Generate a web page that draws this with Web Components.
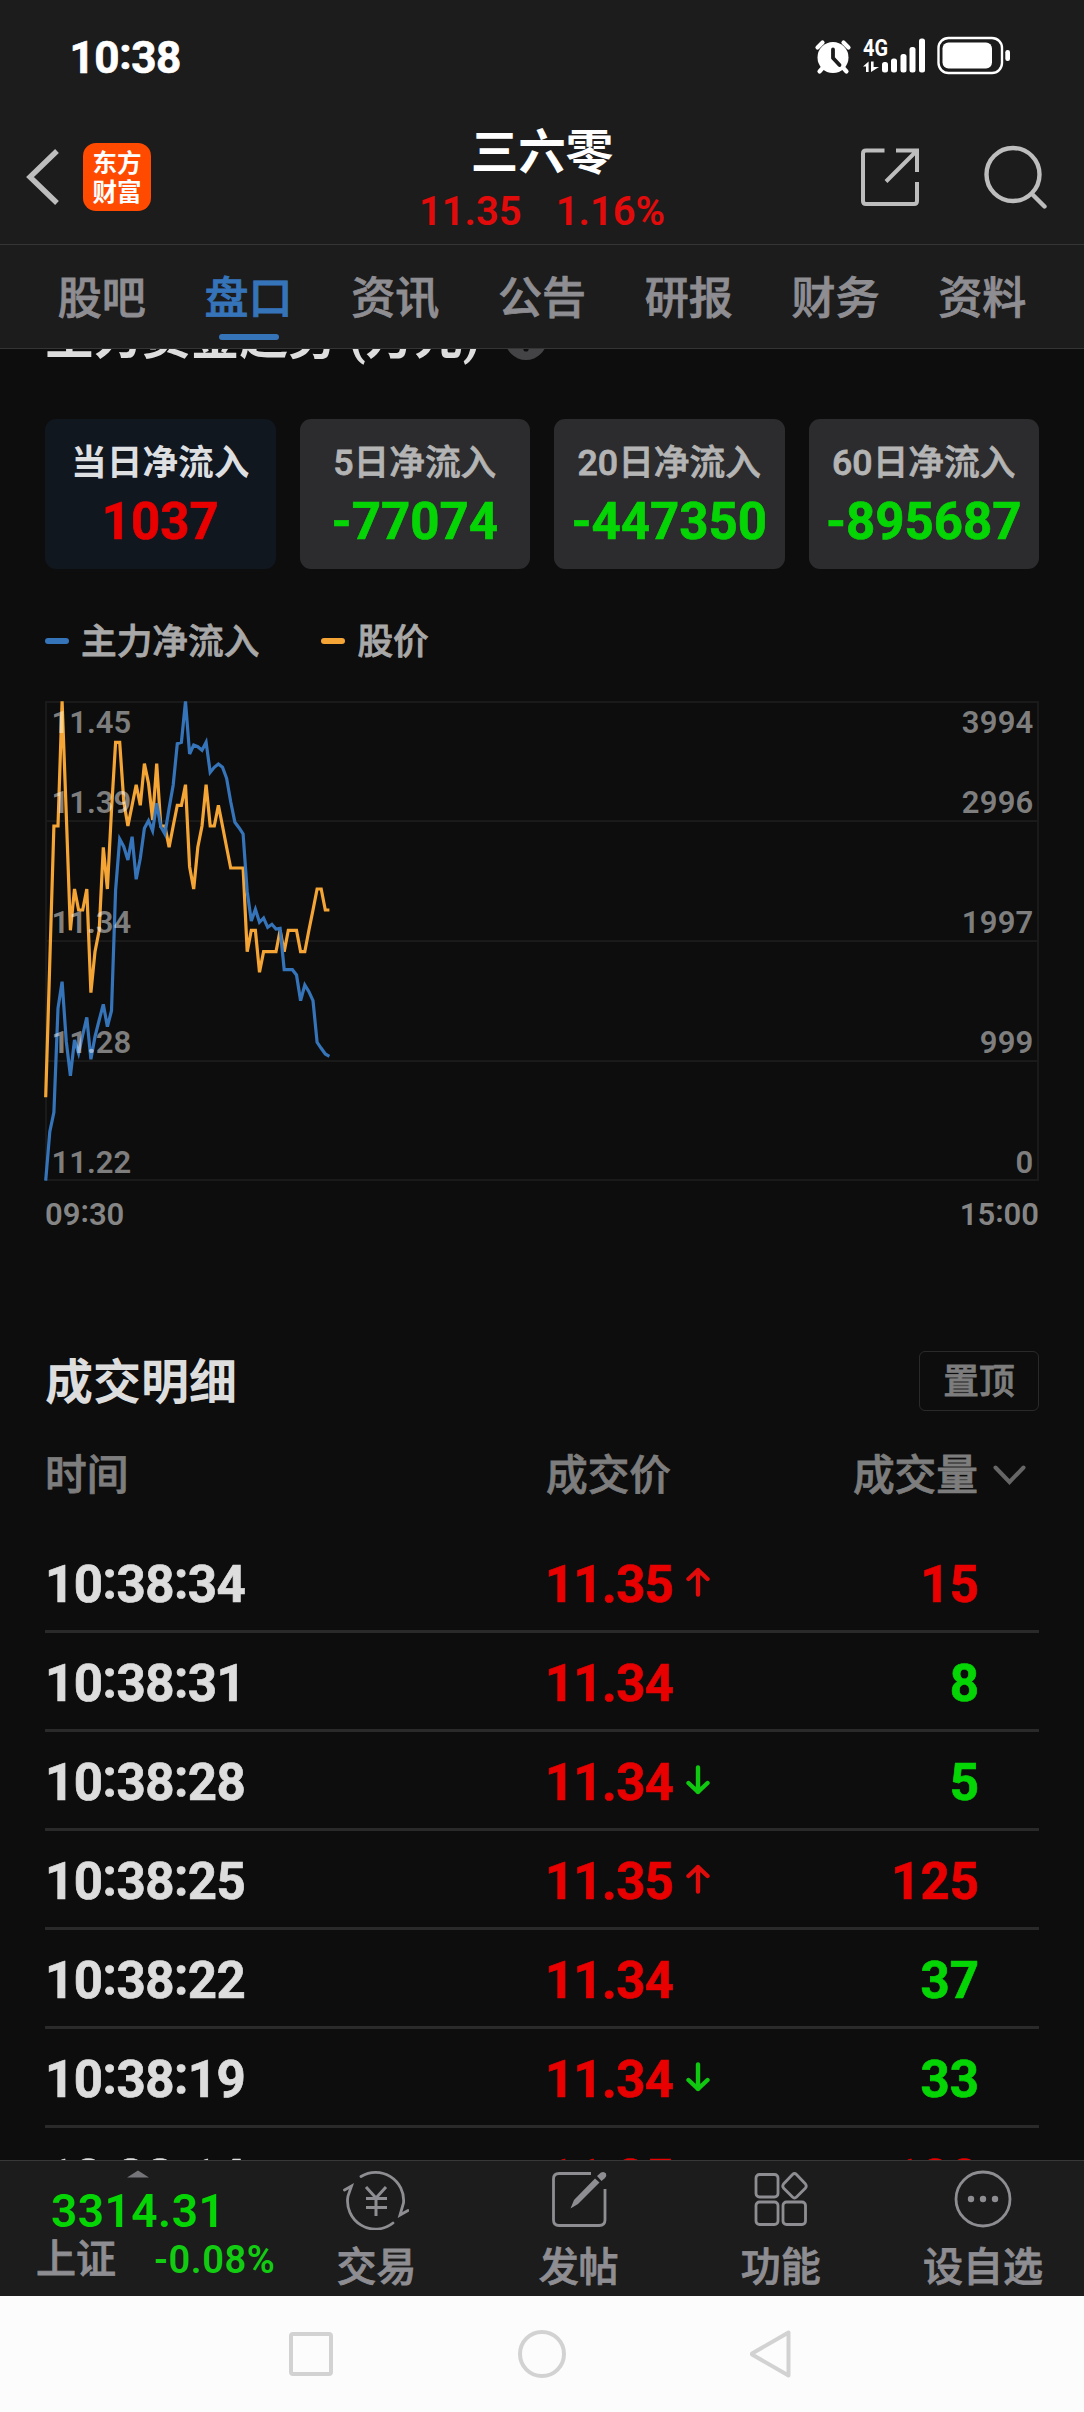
<!DOCTYPE html>
<html lang="zh-CN">
<head>
<meta charset="utf-8">
<title>三六零 11.35</title>
<style>
html,body{margin:0;padding:0;background:#0d0d0d}
body{font-family:Roboto,"Noto Sans CJK SC",sans-serif;color:#ddd}
</style>
</head>
<body>
<quote-app></quote-app>
<script>
const define = (name, css, html) => customElements.define(name, class extends HTMLElement {
  constructor() {
    super();
    const root = this.attachShadow({ mode: 'open' });
    const body = typeof html === 'function' ? html(this) : html;
    root.innerHTML = `<style>*{box-sizing:border-box}svg{display:block;flex:none}${css}</style>${body}`;
  }
});
/* Clock strings: the colon sits at the middle of the figures. */
const clock = s => s.replace(/:/g, '<span class="c">:</span>');
const clockCss = '.c{vertical-align:.085em;line-height:0}';
/* Medium weight for Han text, between the regular and the bold face. */
const medium = '-webkit-text-stroke:.8px currentColor;';
/* Slightly heavier figures for prices and amounts. */
const heavy = '-webkit-text-stroke:.7px currentColor;';

define('status-bar',
  `:host{display:flex;height:116px;padding:0 73px 0 69.500px;justify-content:space-between;align-items:center;color:#fff;flex:none}
   .t{font-weight:700;font-size:44px;line-height:52px;letter-spacing:-.4px;${heavy}}
   svg{margin-top:-4px}${clockCss}`,
  `<span class="t">${clock('10:38')}</span>
   <svg width="197" height="40" viewBox="814 36 197 40" fill="#fff">
     <circle cx="833" cy="57.5" r="15.5"/>
     <g stroke="#fff" stroke-width="4.2" stroke-linecap="round" fill="none">
       <path d="M817.500 47.500l5-5M843.500 42.500l5 5M823.500 67l-4 4.500M842.500 67l4 4.500"/></g>
     <path d="M833 49.500v8.500l6.500 7" fill="none" stroke="#1c1c1c" stroke-width="3.800" stroke-linecap="round" stroke-linejoin="round"/>
     <text x="863" y="56" font-size="23.500" font-weight="700" font-family="Roboto" textLength="25" lengthAdjust="spacingAndGlyphs">4G</text>
     <path d="M863 66.500L868.600 61.500V72H866V66.500ZM871 61.500h2.600v5.500h5.400L871 72Z"/>
     <rect x="882" y="62" width="6" height="10.500" rx="2.500"/><rect x="891" y="58.500" width="6" height="14" rx="2.500"/>
     <rect x="900.500" y="54" width="6" height="18.500" rx="2.500"/><rect x="909.500" y="47" width="6" height="25.500" rx="2.500"/>
     <rect x="919" y="38.500" width="6" height="34" rx="2.500"/>
     <rect x="938.500" y="38" width="63.500" height="35" rx="10" fill="none" stroke="#fff" stroke-width="2.400"/>
     <rect x="942.500" y="42.500" width="49.500" height="26" rx="6"/>
     <rect x="1005.300" y="50" width="4.700" height="11" rx="2.200"/>
   </svg>`);

define('app-logo',
  `:host{display:flex;flex-direction:column;justify-content:center;align-items:center;width:68px;height:68px;border-radius:13px;background:#ff4a00;
   color:#fff;font:700 24.500px/29.500px "Noto Sans CJK SC",sans-serif;padding-bottom:2px;box-sizing:border-box}`,
  `<span>东方</span><span>财富</span>`);

define('stock-header',
  `:host{display:grid;grid-template-columns:1fr auto 1fr;height:129px;border-bottom:1px solid #353535;flex:none}
   .l,.r{display:flex;align-items:center;height:122px}
   .l{padding-left:25px;gap:22px}.r{justify-content:flex-end;padding-right:36px;gap:64px}
   .m{display:flex;flex-direction:column;align-items:center;padding-top:11px}
   .n{font-size:47.500px;line-height:52px;font-weight:700;color:#fff}
   .p{display:flex;gap:34px;font-size:40px;line-height:50px;margin-top:8px;font-weight:600;color:#e20b0b}`,
  `<div class="l"><svg width="36" height="58" viewBox="0 0 36 58" fill="none" stroke="#bdbdbd" stroke-width="5.400"><path d="M32 3L5 29L32 55"/></svg><app-logo></app-logo></div>
   <div class="m"><div class="n">三六零</div><div class="p"><span>11.35</span><span>1.16%</span></div></div>
   <div class="r">
     <svg width="60" height="60" viewBox="0 0 60 60" fill="none" stroke="#bdbdbd" stroke-width="4"><path d="M24.500 3.500H6Q3 3.500 3 6.500V54Q3 57 6 57H54Q57 57 57 54V35M36 3.500H57V25M56 4.500L26 34.500"/></svg>
     <svg width="64" height="64" viewBox="0 0 64 64" fill="none" stroke="#bdbdbd" stroke-width="4.400"><circle cx="29" cy="29.500" r="26.500"/><path d="M48 49L60.500 61.500" stroke-linecap="round"/></svg>
   </div>`);

define('nav-tab',
  `:host{display:flex;flex:1;flex-direction:column;align-items:center;color:#8e8d92;font-size:44px;line-height:50px;font-weight:500;padding-top:29px;${medium}}
   i{width:60px;height:6px;border-radius:3px;margin-top:10px}
   :host([on]){color:#3674ba}:host([on]) i{background:#3674ba}`,
  `<slot></slot><i></i>`);

define('tab-bar',
  `:host{display:flex;height:104px;padding:0 28.500px;border-bottom:1px solid #353535;flex:none}`,
  ['股吧','盘口','资讯','公告','研报','财务','资料'].map((t,i)=>`<nav-tab${i===1?' on':''}>${t}</nav-tab>`).join(''));

define('flow-card',
  `:host{display:flex;flex-direction:column;align-items:center;height:150px;border-radius:11px;background:#2c2c2e;padding-top:18px;
   color:#b4b4b4;font-size:35.700px;line-height:52px;font-weight:500}
   span{${medium}}
   :host([on]){background:#10171f;color:#dedfe1;font-weight:700}
   :host([on]) span{-webkit-text-stroke:0}
   b{font-size:51px;line-height:60px;font-weight:700;color:#05d505;margin-top:3px;white-space:nowrap;${heavy}}
   :host([on]) b{color:#e80000}`,
  el => `<span><slot></slot></span><b>${el.getAttribute('value')}</b>`);

define('legend-item',
  `:host{display:flex;align-items:center;gap:12px;color:#a8a8a8;font-size:35.700px;line-height:50px;font-weight:500}
   i{width:24px;height:6px;border-radius:3px;background:var(--c)}
   span{margin-top:2px;${medium}}`,
  `<i></i><span><slot></slot></span>`);

const PRICE = [1252,845,438,438,64,405,751,627,690,690,627,938,815,751,502,627,390,187,187,365,438,376,314,376,251,310,420,251,438,438,502,438,376,376,314,560,627,502,438,314,438,438,376,438,502,564,564,564,564,815,751,751,877,815,815,815,815,751,815,751,751,751,815,815,751,690,627,627,690,690];
const FLOW = [1502,1355,1297,985,905,1085,1187,1080,1120,1065,1012,1138,1070,1020,973,1040,992,630,477,500,540,470,598,535,445,422,452,370,440,462,385,315,191,187,64,222,195,200,211,187,277,262,252,262,295,365,427,443,462,635,723,688,727,714,742,733,747,745,869,869,869,885,962,915,935,962,1087,1105,1122,1129];
const line = a => a.map((v,i)=>`${(0.700+4.112*i).toFixed(1)},${(v/3-21).toFixed(1)}`).join(' ');

define('trend-chart',
  `:host{display:block}
   text{font-size:31px;font-weight:600;fill:#fff;fill-opacity:.48}
   .x{display:flex;justify-content:space-between;font-size:31px;font-weight:600;line-height:40px;color:#858585;margin-top:14px}
   svg{overflow:visible}${clockCss}`,
  () => {
    const base = [32,112,232,352,472];
    return `<svg width="994" height="480" viewBox="0 0 994 480">
     <g fill="none" stroke="#1a1a1a" stroke-width="2"><rect x="1" y="1" width="992" height="478"/><path d="M0 120H994M0 240H994M0 360H994"/></g>
     <polyline points="${line(PRICE)}" fill="none" stroke="#f4a535" stroke-width="3.200"/>
     <polyline points="${line(FLOW)}" fill="none" stroke="#3674ba" stroke-width="3.200"/>
     ${['11.45','11.39','11.34','11.28','11.22'].map((t,i)=>`<text x="6.500" y="${base[i]}">${t}</text>`).join('')}
     ${['3994','2996','1997','999','0'].map((t,i)=>`<text x="988.500" y="${base[i]}" text-anchor="end" letter-spacing=".2">${t}</text>`).join('')}
    </svg>
    <div class="x"><span>${clock('09:30')}</span><span>${clock('15:00')}</span></div>`;
  });

define('section-title',
  `:host{display:flex;align-items:center;font-size:48px;line-height:60px;font-weight:700;color:#ddd;white-space:nowrap}`,
  `<slot></slot>`);

define('tick-row',
  `:host{display:grid;grid-template-columns:500px 1fr auto;align-items:center;height:99px;border-bottom:3px solid #2a2a2a;padding:5px 60px 0 0;
   font-size:51px;line-height:60px;font-weight:700;color:#ddd;box-sizing:border-box;${heavy}}
   .t{letter-spacing:-.5px}
   .p{display:flex;align-items:center;gap:13px;color:#e80000;letter-spacing:-.7px}
   .v{color:#05d505}:host([buy]) .v{color:#e80000}
   svg{margin-top:-5px}${clockCss}`,
  el => {
    const d = el.getAttribute('dir');
    const arrow = d === 'up' ? `<svg width="24" height="30" viewBox="0 0 24 30" fill="none" stroke="#e00b0b" stroke-width="4.400" stroke-linecap="round" stroke-linejoin="round"><path d="M12 27.500V3M2.500 12L12 3L21.500 12"/></svg>`
      : d === 'down' ? `<svg width="24" height="30" viewBox="0 0 24 30" fill="none" stroke="#0fc80f" stroke-width="4.400" stroke-linecap="round" stroke-linejoin="round"><path d="M12 2.500V27M2.500 18L12 27L21.500 18"/></svg>` : '';
    return `<span class="t">${clock(el.getAttribute('time'))}</span><span class="p"><span>${el.getAttribute('price')}</span>${arrow}</span><span class="v">${el.getAttribute('vol')}</span>`;
  });

define('trade-list',
  `:host{display:block}
   .h{display:flex;justify-content:space-between;align-items:center;height:60px}
   .h section-title{margin-top:3px}
   button{width:120px;height:60px;border:1px solid #2a2a2a;border-radius:6px;background:none;color:#7d7d7d;font:500 35.700px/56px Roboto,"Noto Sans CJK SC",sans-serif;padding:2px 0 0;${medium}}
   .c{display:grid;grid-template-columns:501px 1fr auto;align-items:center;padding-right:13px;font-size:41.700px;line-height:60px;font-weight:500;color:#7d7d7d;margin:35px 0 28px;${medium}}
   .s{display:flex;align-items:center;gap:15px}.s svg{margin-top:-2px}`,
  `<div class="h"><section-title>成交明细</section-title><button>置顶</button></div>
   <div class="c"><span>时间</span><span>成交价</span><span class="s">成交量<svg width="33" height="20" viewBox="0 0 33 20" fill="none" stroke="#666" stroke-width="4" stroke-linecap="round"><path d="M2.500 2.500L16.500 17L30.500 2.500"/></svg></span></div>
   <tick-row time="10:38:34" price="11.35" dir="up" vol="15" buy></tick-row>
   <tick-row time="10:38:31" price="11.34" vol="8"></tick-row>
   <tick-row time="10:38:28" price="11.34" dir="down" vol="5"></tick-row>
   <tick-row time="10:38:25" price="11.35" dir="up" vol="125" buy></tick-row>
   <tick-row time="10:38:22" price="11.34" vol="37"></tick-row>
   <tick-row time="10:38:19" price="11.34" dir="down" vol="33"></tick-row>
   <tick-row time="10:38:14" price="11.35" vol="100" buy></tick-row>`);

define('market-page',
  `:host{display:block;flex:1;min-height:0;overflow:hidden;padding:0 45px}
   .t{display:flex;align-items:center;gap:25px;margin-top:-41px;height:60px}
   .t section-title{font-size:48.600px}
   .t svg{margin-top:1px}
   .cards{display:grid;grid-template-columns:repeat(4,1fr);gap:24px;margin-top:51px}
   .lg{display:flex;gap:62px;margin:46px 0 34px}
   trade-list{margin-top:116px}`,
  `<div class="t"><section-title>主力资金趋势 (万元)</section-title>
     <svg width="42" height="42" viewBox="0 0 42 42"><circle cx="21" cy="21" r="21" fill="#444446"/><path d="M14.500 16a6.500 6.500 0 1 1 9 6q-2.500 1-2.500 4" fill="none" stroke="#0d0d0d" stroke-width="3.500"/><circle cx="21" cy="31" r="2.600" fill="#0d0d0d"/></svg></div>
   <div class="cards"><flow-card on value="1037">当日净流入</flow-card><flow-card value="-77074">5日净流入</flow-card><flow-card value="-447350">20日净流入</flow-card><flow-card value="-895687">60日净流入</flow-card></div>
   <div class="lg"><legend-item style="--c:#3674ba">主力净流入</legend-item><legend-item style="--c:#f4a535">股价</legend-item></div>
   <trend-chart></trend-chart>
   <trade-list></trade-list>`);

define('dock-item',
  `:host{display:flex;flex:1;flex-direction:column;align-items:center;padding-top:9px;color:#8e8d92;font-size:40px;line-height:50px;font-weight:500}
   span{margin-top:13px;white-space:nowrap;${medium}}`,
  el => {
    const icons = {
      trade: `<g stroke-linecap="round"><path d="M18 6.500A28 28 0 0 1 60.500 33L57 45L65 40.500M50 53A28 28 0 0 1 5 26L8.500 16L1.500 20"/></g><path d="M23 17L33 28L43 17M23 28.500H44M23 37.500H44M33 28V46" stroke-width="3"/>`,
      post: `<path d="M45 3.500H13Q7.500 3.500 7.500 9V50Q7.500 55.500 13 55.500H53Q59 55.500 59 50V19"/><path d="M24.500 38.500L28 30L49 8.500L53.500 12.500L32 34ZM51 6L55 2.500Q58 1 60 3.500Q61 6 59 8L55.500 11Z" fill="#8e8d92" stroke="none"/>`,
      tools: `<rect x="8" y="4.500" width="22" height="22.500" rx="3.500"/><rect x="8" y="32" width="22" height="22.500" rx="3.500"/><rect x="35" y="32" width="22.500" height="22.500" rx="3.500"/><path d="M44.500 4.500Q46.500 2.500 48.500 4.500L57.500 14Q59 16 57.500 18L48.500 27Q46.500 29 44.500 27L35.500 18Q34 16 35.500 14Z"/>`,
      more: `<circle cx="33" cy="29" r="27"/><g fill="#8e8d92" stroke="none"><circle cx="21" cy="29" r="3.200"/><circle cx="33" cy="29" r="3.200"/><circle cx="45" cy="29" r="3.200"/></g>` };
    return `<svg width="66" height="60" viewBox="0 0 66 60" fill="none" stroke="#8e8d92" stroke-width="2.800">${icons[el.getAttribute('icon')]}</svg><span><slot></slot></span>`;
  });

define('index-quote',
  `:host{display:flex;flex-direction:column;width:275.400px;padding:9px 0 0 36px;flex:none;box-sizing:border-box;white-space:nowrap}
   svg{margin-left:91px}
   b{font-size:46px;line-height:50px;font-weight:600;color:#05d505;margin:8px 0 0 15px;letter-spacing:.5px}
   div{display:flex;align-items:center;font-size:40px;line-height:40px;font-weight:500;color:#8e8d92;margin-top:4px}
   div span{${medium}}
   em{font-style:normal;font-size:38px;font-weight:600;color:#12cc12;margin-left:38px;letter-spacing:.6px}`,
  `<svg width="22" height="8" viewBox="0 0 22 8"><path d="M0 7.500L11 .5L22 7.500Z" fill="#76757a"/></svg><b>3314.31</b><div><span>上证</span><em>-0.08%</em></div>`);

define('dock-bar',
  `:host{display:flex;height:136px;background:#1c1c1c;border-top:1px solid #383838;flex:none;box-sizing:border-box}`,
  `<index-quote></index-quote><dock-item icon="trade">交易</dock-item><dock-item icon="post">发帖</dock-item><dock-item icon="tools">功能</dock-item><dock-item icon="more">设自选</dock-item>`);

define('system-nav',
  `:host{display:flex;height:116px;background:#fcfcfc;justify-content:center;align-items:center;gap:181px;flex:none}`,
  `<svg width="50" height="50" viewBox="0 0 50 50" fill="none" stroke="#d2d2d2" stroke-width="4"><rect x="5" y="5" width="40" height="40" rx="2"/></svg>
   <svg width="50" height="50" viewBox="0 0 50 50" fill="none" stroke="#d2d2d2" stroke-width="4"><circle cx="25" cy="25" r="22"/></svg>
   <svg width="50" height="50" viewBox="0 0 50 50" fill="none" stroke="#d2d2d2" stroke-width="4" stroke-linejoin="round"><path d="M40.500 3.500V46.500L4 25.500V24.500Z"/></svg>`);

define('quote-app',
  `:host{display:flex;flex-direction:column;width:1084px;height:2412px;overflow:hidden}
   header{background:#1c1c1c;flex:none}
   status-bar,stock-header,tab-bar,market-page{box-sizing:border-box}`,
  `<header><status-bar></status-bar><stock-header></stock-header><tab-bar></tab-bar></header>
   <market-page></market-page><dock-bar></dock-bar><system-nav></system-nav>`);
</script>
</body>
</html>
